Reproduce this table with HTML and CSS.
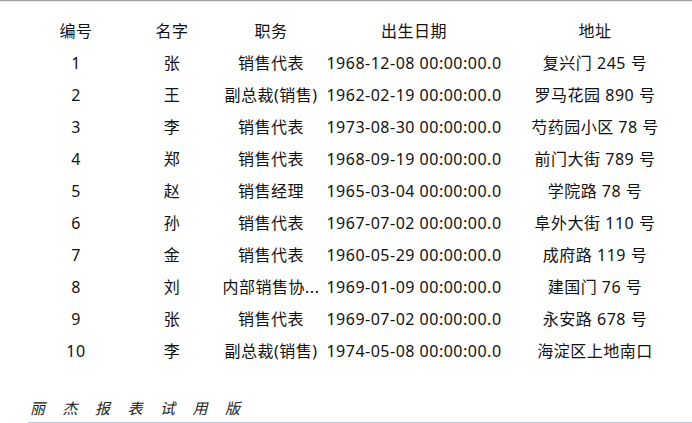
FILE: index.html
```html
<!DOCTYPE html>
<html lang="zh-CN">
<head>
<meta charset="utf-8">
<title>报表</title>
<link rel="stylesheet" href="styles.css">
</head>
<body>
<div class="topbar"></div>
<div class="report">
  <div class="grid">
    <div class="row">
      <div class="cell">编号</div><div class="cell">名字</div><div class="cell">职务</div><div class="cell">出生日期</div><div class="cell">地址</div>
    </div>
    <div class="row"><div class="cell">1</div><div class="cell">张</div><div class="cell">销售代表</div><div class="cell">1968-12-08 00:00:00.0</div><div class="cell">复兴门 245 号</div></div>
    <div class="row"><div class="cell">2</div><div class="cell">王</div><div class="cell">副总裁(销售)</div><div class="cell">1962-02-19 00:00:00.0</div><div class="cell">罗马花园 890 号</div></div>
    <div class="row"><div class="cell">3</div><div class="cell">李</div><div class="cell">销售代表</div><div class="cell">1973-08-30 00:00:00.0</div><div class="cell">芍药园小区 78 号</div></div>
    <div class="row"><div class="cell">4</div><div class="cell">郑</div><div class="cell">销售代表</div><div class="cell">1968-09-19 00:00:00.0</div><div class="cell">前门大街 789 号</div></div>
    <div class="row"><div class="cell">5</div><div class="cell">赵</div><div class="cell">销售经理</div><div class="cell">1965-03-04 00:00:00.0</div><div class="cell">学院路 78 号</div></div>
    <div class="row"><div class="cell">6</div><div class="cell">孙</div><div class="cell">销售代表</div><div class="cell">1967-07-02 00:00:00.0</div><div class="cell">阜外大街 110 号</div></div>
    <div class="row"><div class="cell">7</div><div class="cell">金</div><div class="cell">销售代表</div><div class="cell">1960-05-29 00:00:00.0</div><div class="cell">成府路 119 号</div></div>
    <div class="row"><div class="cell">8</div><div class="cell">刘</div><div class="cell">内部销售协...</div><div class="cell">1969-01-09 00:00:00.0</div><div class="cell">建国门 76 号</div></div>
    <div class="row"><div class="cell">9</div><div class="cell">张</div><div class="cell">销售代表</div><div class="cell">1969-07-02 00:00:00.0</div><div class="cell">永安路 678 号</div></div>
    <div class="row"><div class="cell">10</div><div class="cell">李</div><div class="cell">副总裁(销售)</div><div class="cell">1974-05-08 00:00:00.0</div><div class="cell">海淀区上地南口</div></div>
  </div>
  <div class="footer"><span class="mark">丽杰报表试用版</span></div>
</div>
</body>
</html>
```
FILE: styles.css
```css
html, body {
  margin: 0;
  padding: 0;
  background: #ffffff;
}
body {
  width: 692px;
  height: 423px;
  overflow: hidden;
  font-family: "Noto Sans", "Noto Sans CJK SC", sans-serif;
  color: #111111;
}
.topbar {
  height: 1px;
  background: #a3a3a3;
  border-bottom: 1px solid #e6e6e6;
}
.report {
  margin-left: 28px;
  padding-top: 13px;
}
.grid {
  display: flex;
  flex-direction: column;
}
.row {
  display: grid;
  grid-template-columns: 96px 96px 102px 184px 178px;
  height: 32px;
  align-items: center;
  font-size: 16px;
}
.cell {
  text-align: center;
  white-space: nowrap;
  letter-spacing: 0.5px;
  line-height: 32px;
}
.footer {
  margin-top: 25px;
  height: 30px;
  border-bottom: 2px solid #b7cadf;
  display: flex;
  align-items: center;
}
.mark {
  font-style: italic;
  font-size: 15px;
  letter-spacing: 17.5px;
  padding-left: 2px;
  font-family: "Noto Sans CJK SC", sans-serif;
  color: #222222;
}
```
